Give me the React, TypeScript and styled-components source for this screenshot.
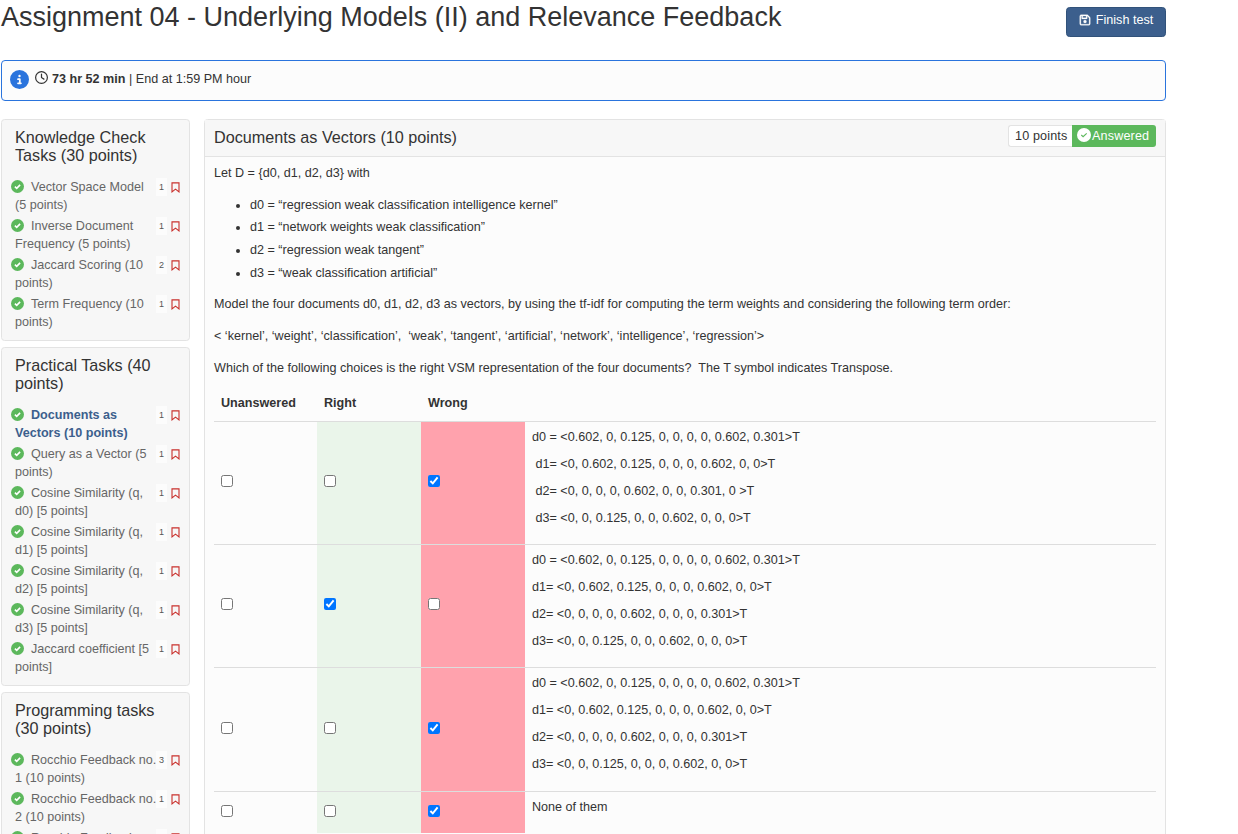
import React from "react";
import styled, { createGlobalStyle } from "styled-components";
import { FaCircleInfo, FaRegClock, FaRegFloppyDisk } from "react-icons/fa6";

const Global = createGlobalStyle`
  * { box-sizing: border-box; }
  body {
    margin: 0;
    background: #fff;
    color: #333;
    font-family: "Liberation Sans", Arial, sans-serif;
    font-size: 12.6px;
    line-height: 18px;
  }
`;

const Page = styled.div`
  width: 1238px;
  height: 834px;
  overflow: hidden;
  padding: 0 72px 0 1px;
`;

const TopBar = styled.header`
  display: flex;
  justify-content: space-between;
  align-items: flex-start;
  height: 60px;
`;

const Title = styled.h1`
  margin: 2px 0 0;
  font-size: 27px;
  line-height: 30px;
  font-weight: 400;
  white-space: nowrap;
`;

const FinishButton = styled.button`
  display: flex;
  justify-content: center;
  gap: 5px;
  width: 100px;
  height: 30px;
  margin-top: 7px;
  padding: 3px 0 0;
  border: 1px solid #31527a;
  border-radius: 3.6px;
  background: #3c5f8d;
  color: #fff;
  font: 12.6px/18px "Liberation Sans", Arial, sans-serif;
  white-space: nowrap;

  svg {
    margin-top: 3px;
    stroke: #fff;
    stroke-width: 12px;
  }
`;

const Notice = styled.div`
  display: flex;
  height: 41px;
  padding: 9px 8px;
  border: 1px solid #2a74dd;
  border-radius: 4px;
  background: #fcfcfc;
  white-space: pre;
`;

const InfoIcon = styled(FaCircleInfo)`
  width: 19px;
  height: 19px;
  margin-right: 6px;
  color: #2a74dd;
`;

const ClockIcon = styled(FaRegClock)`
  width: 13px;
  height: 13px;
  margin: 1px 4px 0 0;
`;

const Columns = styled.div`
  display: flex;
  gap: 14px;
  margin-top: 18px;
`;

const Sidebar = styled.nav`
  width: 189px;
  display: flex;
  flex-direction: column;
  gap: 6px;
`;

const Section = styled.section<{ $height: number }>`
  height: ${(p) => p.$height}px;
  padding: 8px 0 0 13px;
  border: 1px solid #e3e3e3;
  border-radius: 3.6px;
  background: #f7f7f7;
`;

const SectionTitle = styled.h4`
  margin: 0 0 14px;
  font-size: 16.2px;
  line-height: 18px;
  font-weight: 400;
  white-space: pre;
`;

const Task = styled.div<{ $active?: boolean }>`
  display: flex;
  height: 39px;
  color: ${(p) => (p.$active ? "#3c5f8d" : "#666")};
  font-weight: ${(p) => (p.$active ? 700 : 400)};
`;

const TaskName = styled.div`
  width: 141px;
  white-space: pre;
`;

const TaskCheck = styled.svg`
  width: 13px;
  height: 13px;
  margin: 0 7px 0 -4px;
  vertical-align: -2px;
`;

const Count = styled.span`
  width: 11px;
  height: 18px;
  background: #fcfcfc;
  color: #555;
  font-size: 9px;
  font-weight: 400;
  line-height: 19px;
  text-align: center;
`;

const Mark = styled.svg`
  width: 9px;
  height: 11px;
  margin: 4px 0 0 4px;
`;

const Panel = styled.main`
  width: 962px;
  height: 740px;
  border: 1px solid #e3e3e3;
  border-radius: 3.6px;
  background: #fcfcfc;
`;

const PanelHead = styled.div`
  display: flex;
  justify-content: space-between;
  height: 37px;
  padding: 5px 9px 0;
  border-bottom: 1px solid #e3e3e3;
  background: #f7f7f7;
`;

const PanelTitle = styled.h4`
  margin: 3px 0 0;
  font-size: 16.2px;
  line-height: 18px;
  font-weight: 400;
`;

const Status = styled.div`
  display: flex;
  height: 22px;
  line-height: 20px;
  letter-spacing: 0.15px;
  white-space: nowrap;
`;

const Points = styled.span`
  width: 64px;
  padding-left: 6px;
  border: 1px solid #e3e3e3;
  border-right: 0;
  border-radius: 3px 0 0 3px;
  background: #fff;
`;

const Answered = styled.span`
  display: flex;
  width: 84px;
  padding: 1px 0 0 5px;
  border-radius: 0 3px 3px 0;
  background: #5cb85c;
  color: #fff;

  svg { width: 14px; height: 14px; margin: 2px 1px 0 0; }
`;

const Body = styled.div`
  padding: 6.7px 9px 0;
`;

const Text = styled.p`
  margin: 0 0 14px;
  white-space: pre;
`;

const Bullets = styled.ul`
  margin: 0 0 8.3px;
  padding-left: 36px;
`;

const Bullet = styled.li`
  height: 22.75px;
`;

const Table = styled.div`
  margin-top: -5px;
  width: 942px;
`;

const Row = styled.div<{ $height: number }>`
  display: grid;
  grid-template-columns: 103px 104px 104px 1fr;
  height: ${(p) => p.$height}px;
  border-bottom: 1px solid #ddd;

  &:last-child { border-color: transparent; }
`;

const HeadCell = styled.div`
  padding: 8px 7px;
  font-weight: 700;
`;

const Cell = styled.label<{ $bg?: string }>`
  display: flex;
  align-items: center;
  padding: 0 7px 3px;
  background: ${(p) => p.$bg ?? "transparent"};

  input { width: 12px; height: 12px; margin: 0; }
`;

const Choice = styled.div`
  padding: 6px 7px;
`;

const Line = styled.p`
  margin: 0 0 9px;
  white-space: pre;
`;

type Item = { name: string; count: number; active?: boolean };
const sections: { title: string; height: number; items: Item[] }[] = [
  {
    title: "Knowledge Check\nTasks (30 points)",
    height: 222,
    items: [
      { name: "Vector Space Model\n(5 points)", count: 1 },
      { name: "Inverse Document\nFrequency (5 points)", count: 1 },
      { name: "Jaccard Scoring (10\npoints)", count: 2 },
      { name: "Term Frequency (10\npoints)", count: 1 },
    ],
  },
  {
    title: "Practical Tasks (40\npoints)",
    height: 339,
    items: [
      { name: "Documents as\nVectors (10 points)", count: 1, active: true },
      { name: "Query as a Vector (5\npoints)", count: 1 },
      { name: "Cosine Similarity (q,\nd0) [5 points]", count: 1 },
      { name: "Cosine Similarity (q,\nd1) [5 points]", count: 1 },
      { name: "Cosine Similarity (q,\nd2) [5 points]", count: 1 },
      { name: "Cosine Similarity (q,\nd3) [5 points]", count: 1 },
      { name: "Jaccard coefficient [5\npoints]", count: 1 },
    ],
  },
  {
    title: "Programming tasks\n(30 points)",
    height: 200,
    items: [
      { name: "Rocchio Feedback no.\n1 (10 points)", count: 3 },
      { name: "Rocchio Feedback no.\n2 (10 points)", count: 1 },
      { name: "Rocchio Feedback\nno. 3 (10 points)", count: 1 },
    ],
  },
];

const documents = [
  "d0 = “regression weak classification intelligence kernel”",
  "d1 = “network weights weak classification”",
  "d2 = “regression weak tangent”",
  "d3 = “weak classification artificial”",
];

const choices: { picked: number; height: number; lines: string[] }[] = [
  {
    picked: 2,
    height: 123,
    lines: [
      "d0 = <0.602, 0, 0.125, 0, 0, 0, 0, 0.602, 0.301>T",
      " d1= <0, 0.602, 0.125, 0, 0, 0, 0.602, 0, 0>T",
      " d2= <0, 0, 0, 0, 0.602, 0, 0, 0.301, 0 >T",
      " d3= <0, 0, 0.125, 0, 0, 0.602, 0, 0, 0>T",
    ],
  },
  {
    picked: 1,
    height: 123,
    lines: [
      "d0 = <0.602, 0, 0.125, 0, 0, 0, 0, 0.602, 0.301>T",
      "d1= <0, 0.602, 0.125, 0, 0, 0, 0.602, 0, 0>T",
      "d2= <0, 0, 0, 0, 0.602, 0, 0, 0, 0.301>T",
      "d3= <0, 0, 0.125, 0, 0, 0.602, 0, 0, 0>T",
    ],
  },
  {
    picked: 2,
    height: 124,
    lines: [
      "d0 = <0.602, 0, 0.125, 0, 0, 0, 0, 0.602, 0.301>T",
      "d1= <0, 0.602, 0.125, 0, 0, 0, 0.602, 0, 0>T",
      "d2= <0, 0, 0, 0, 0.602, 0, 0, 0, 0.301>T",
      "d3= <0, 0, 0.125, 0, 0, 0, 0.602, 0, 0>T",
    ],
  },
  { picked: 2, height: 42, lines: ["None of them"] },
];

const cellColors = [undefined, "#eaf5ea", "#ffa2ad"];

export default function App() {
  return (
    <Page>
      <Global />
      <TopBar>
        <Title>Assignment 04 - Underlying Models (II) and Relevance Feedback</Title>
        <FinishButton>
          <FaRegFloppyDisk size={12} />
          Finish test
        </FinishButton>
      </TopBar>
      <Notice>
        <InfoIcon />
        <ClockIcon />
        <b>73 hr 52 min</b> | End at 1:59 PM hour
      </Notice>
      <Columns>
        <Sidebar>
          {sections.map((s) => (
            <Section key={s.title} $height={s.height}>
              <SectionTitle>{s.title}</SectionTitle>
              {s.items.map((t) => (
                <Task key={t.name} $active={t.active}>
                  <TaskName>
                    <TaskCheck viewBox="0 0 13 13">
                      <circle cx="6.5" cy="6.5" r="6.5" fill="#5cb85c" />
                      <path d="M3.9 6.7l1.8 1.7 3.4-3.5" fill="none" stroke="#fff" strokeWidth="1.6" />
                    </TaskCheck>
                    {t.name}
                  </TaskName>
                  <Count>{t.count}</Count>
                  <Mark viewBox="0 0 9 11">
                    <path d="M1 .9h7v9L4.5 7.1 1 9.9z" fill="none" stroke="#c9302c" strokeWidth="1.1" />
                  </Mark>
                </Task>
              ))}
            </Section>
          ))}
        </Sidebar>
        <Panel>
          <PanelHead>
            <PanelTitle>Documents as Vectors (10 points)</PanelTitle>
            <Status>
              <Points>10 points</Points>
              <Answered>
                <svg viewBox="0 0 14 14">
                  <circle cx="7" cy="7" r="7" fill="#fff" />
                  <path d="M4.3 7l1.8 1.7 3.6-3.4" fill="none" stroke="#5cb85c" strokeWidth="1.1" />
                </svg>
                Answered
              </Answered>
            </Status>
          </PanelHead>
          <Body>
            <Text>{"Let D = {d0, d1, d2, d3} with"}</Text>
            <Bullets>
              {documents.map((d) => (
                <Bullet key={d}>{d}</Bullet>
              ))}
            </Bullets>
            <Text>
              Model the four documents d0, d1, d2, d3 as vectors, by using the tf-idf for computing the term weights and considering the following term order:
            </Text>
            <Text>{"< ‘kernel’, ‘weight’, ‘classification’,  ‘weak’, ‘tangent’, ‘artificial’, ‘network’, ‘intelligence’, ‘regression’>"}</Text>
            <Text>{"Which of the following choices is the right VSM representation of the four documents?  The T symbol indicates Transpose."}</Text>
            <Table>
              <Row $height={36}>
                <HeadCell>Unanswered</HeadCell>
                <HeadCell>Right</HeadCell>
                <HeadCell>Wrong</HeadCell>
              </Row>
              {choices.map((c, i) => (
                <Row key={i} $height={c.height}>
                  {cellColors.map((bg, n) => (
                    <Cell key={n} $bg={bg}>
                      <input type="checkbox" defaultChecked={n === c.picked} />
                    </Cell>
                  ))}
                  <Choice>
                    {c.lines.map((l) => (
                      <Line key={l}>{l}</Line>
                    ))}
                  </Choice>
                </Row>
              ))}
            </Table>
          </Body>
        </Panel>
      </Columns>
    </Page>
  );
}
